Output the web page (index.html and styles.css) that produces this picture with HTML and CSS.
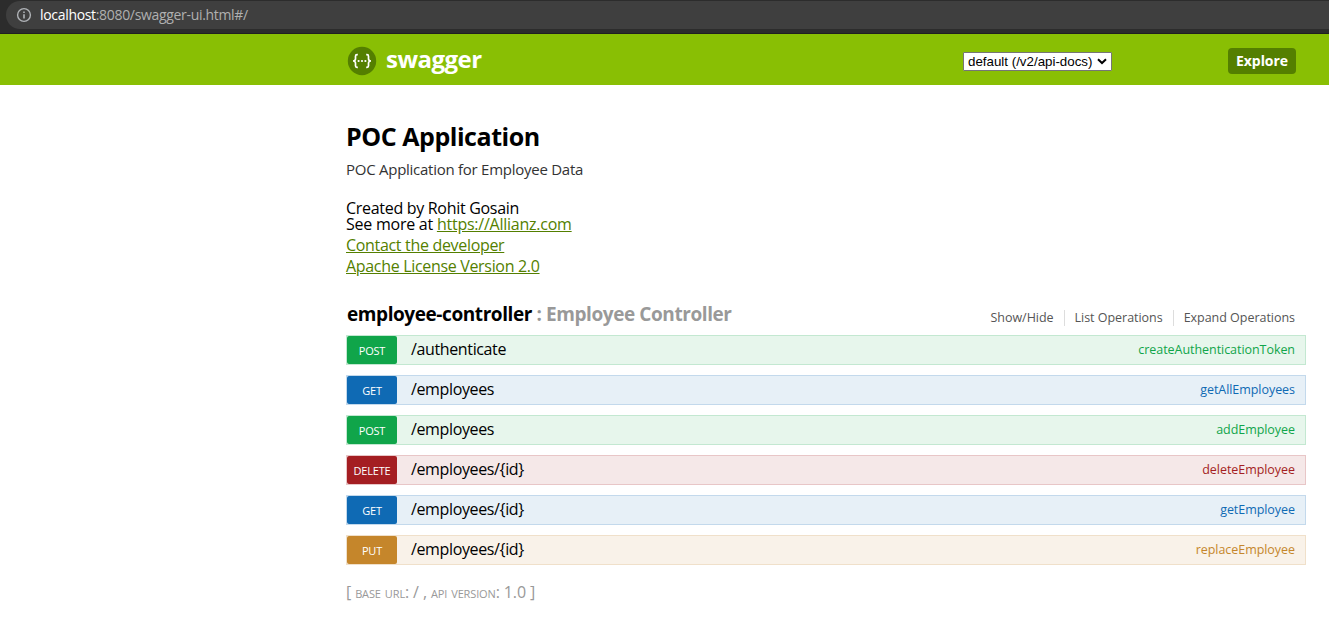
FILE: index.html
```html
<!DOCTYPE html>
<html lang="en">
<head>
<meta charset="utf-8">
<title>Swagger UI</title>
<link rel="stylesheet" href="styles.css">
</head>
<body>
<div class="browser-bar">
  <div class="address">
    <svg class="info-icon" viewBox="0 0 16 16" width="16" height="16"><circle cx="8" cy="8" r="6.4" fill="none" stroke="#b0b3b7" stroke-width="1.4"/><path d="M8 7.2V11.6M8 4.4V6" stroke="#b0b3b7" stroke-width="1.6"/></svg>
    <span class="url"><span class="host">localhost</span><span class="path">:8080/swagger-ui.html#/</span></span>
  </div>
</div>
<header class="header">
  <a class="logo">
    <svg viewBox="0 0 30 30" width="30" height="30"><circle cx="15" cy="15" r="14.2" fill="#547f00"/><g fill="none" stroke="#fff" stroke-width="1.7"><path d="M10.8 8.6H10Q8.5 8.6 8.5 10.2V12.8Q8.5 15 6 15Q8.5 15 8.5 17.2V19.8Q8.5 21.4 10 21.4H10.8"/><path d="M19.2 8.6H20Q21.5 8.6 21.5 10.2V12.8Q21.5 15 24 15Q21.5 15 21.5 17.2V19.8Q21.5 21.4 20 21.4H19.2"/></g><g fill="#fff"><circle cx="11.6" cy="15" r="1.1"/><circle cx="15" cy="15" r="1.1"/><circle cx="18.4" cy="15" r="1.1"/></g></svg>
    <span class="logo-title">swagger</span>
  </a>
  <div class="api-select"><span>default (/v2/api-docs)</span><svg viewBox="0 0 10 7" width="10" height="7"><path d="M1 1.2L5 5L9 1.2" fill="none" stroke="#000" stroke-width="2"/></svg></div>
  <a class="explore">Explore</a>
</header>
<main class="content">
  <h1 class="title">POC Application</h1>
  <p class="description">POC Application for Employee Data</p>
  <div class="meta created">Created by Rohit Gosain</div>
  <div class="meta more">See more at <a class="link">https://Allianz.com</a></div>
  <div class="meta"><a class="link contact">Contact the developer</a></div>
  <div class="meta"><a class="link license">Apache License Version 2.0</a></div>
  <div class="resource-head">
    <h2 class="resource"><span class="name">employee-controller</span><span class="label"> : Employee Controller</span></h2>
    <ul class="options"><li class="show">Show/Hide</li><li class="list">List Operations</li><li class="expand">Expand Operations</li></ul>
  </div>
  <div class="operations">
    <div class="op post"><span class="method">POST</span><span class="route auth">/authenticate</span><span class="nick">createAuthenticationToken</span></div>
    <div class="op get"><span class="method">GET</span><span class="route">/employees</span><span class="nick">getAllEmployees</span></div>
    <div class="op post"><span class="method">POST</span><span class="route">/employees</span><span class="nick">addEmployee</span></div>
    <div class="op delete"><span class="method">DELETE</span><span class="route">/employees/{id}</span><span class="nick">deleteEmployee</span></div>
    <div class="op get"><span class="method">GET</span><span class="route">/employees/{id}</span><span class="nick">getEmployee</span></div>
    <div class="op put"><span class="method">PUT</span><span class="route">/employees/{id}</span><span class="nick">replaceEmployee</span></div>
  </div>
  <footer class="footer">[ <span class="caps">base url</span>: / , <span class="caps">api version</span>: 1.0 ]</footer>
</main>
</body>
</html>
```
FILE: styles.css
```css
* { box-sizing: border-box; }
body { margin: 0; height: 631px; overflow: hidden; background: #fff; color: #000; font-family: "Open Sans", "Noto Sans", sans-serif; white-space: nowrap; }
h1, h2, p, ul { margin: 0; padding: 0; }
.browser-bar { height: 34px; padding: 1px 0 0 6px; background: #2c2c2c; border-bottom: 1px solid #202020; }
.address { height: 28px; display: flex; align-items: center; gap: 8px; padding-left: 10px; background: #3f3f3f; border-radius: 14px 0 0 14px; }
.url { font-size: 14px; line-height: 18px; letter-spacing: -0.32px; color: #b0b0b0; }
.host { color: #fff; }
.header { height: 51px; padding: 2px 33px 0 347px; display: flex; align-items: center; background: #89bf04; }
.logo { width: 616px; display: flex; align-items: center; gap: 9px; }
.logo-title { color: #fff; font-size: 24px; line-height: 30px; font-weight: 700; letter-spacing: -0.5px; padding-bottom: 3px; }
.api-select { width: 149px; height: 19px; margin-top: 1px; padding: 0 4px; display: flex; align-items: center; justify-content: space-between; background: #fff; border: 1px solid #767676; border-radius: 1px; font-family: "Liberation Sans", Arial, sans-serif; font-size: 13.33px; }
.explore { width: 68px; height: 26px; margin-left: auto; border-radius: 4px; background: #547f00; color: #fff; font-size: 14px; line-height: 26px; font-weight: 700; text-align: center; letter-spacing: -0.05px; }
.content { padding: 35px 23px 0 346px; }
.title { font-size: 25px; line-height: 32px; font-weight: 700; letter-spacing: -0.45px; }
.description { margin-top: 7px; font-size: 15px; line-height: 20px; letter-spacing: -0.26px; color: #333; }
.meta { font-size: 16px; line-height: 21px; letter-spacing: -0.32px; }
.created { margin-top: 21px; line-height: 16px; height: 16px; letter-spacing: -0.3px; }
.more { line-height: 16px; margin-bottom: 3px; letter-spacing: -0.24px; }
.link { color: #547f00; text-decoration: underline; }
.resource-head { height: 58px; padding-top: 25px; display: flex; justify-content: space-between; }
.resource { font-size: 19px; line-height: 24px; font-weight: 700; padding-left: 1px; letter-spacing: -0.42px; }
.label { color: #999; white-space: pre; }
.options { display: flex; list-style: none; padding-top: 8px; font-size: 12.5px; letter-spacing: -0.03px; color: #555; }
.options li { height: 16px; line-height: 16px; padding: 0 10px; border-right: 1px solid #ddd; }
.options li:last-child { border-right: 0; padding-right: 11px; }
.operations { display: grid; gap: 10px; }
.op { height: 30px; display: flex; align-items: center; border: 1px solid; padding-right: 10px; }
.method { width: 50px; height: 28px; border-radius: 2px; color: #fff; font-size: 11px; line-height: 30px; text-align: center; letter-spacing: -0.2px; }
.route { margin-left: 14px; padding-bottom: 2px; font-size: 16px; line-height: 24px; letter-spacing: -0.37px; }
.nick { margin-left: auto; font-size: 12.5px; line-height: 20px; letter-spacing: -0.05px; }
.post { background: #e7f6ec; border-color: #c3e8d1; color: #10a54a; }
.post .method { background: #10a54a; }
.get { background: #e7f0f7; border-color: #c3d9ec; color: #0f6ab4; }
.get .method { background: #0f6ab4; }
.delete { background: #f5e8e8; border-color: #e8c6c7; color: #a41e22; }
.delete .method { background: #a41e22; }
.put { background: #f9f2e9; border-color: #f0e0ca; color: #c5862b; }
.put .method { background: #c5862b; }
.op .route { color: #000; }
.footer { margin-top: 16px; font-size: 16px; line-height: 22px; letter-spacing: -0.13px; color: #999; }
.caps { font-variant: small-caps; }
```
